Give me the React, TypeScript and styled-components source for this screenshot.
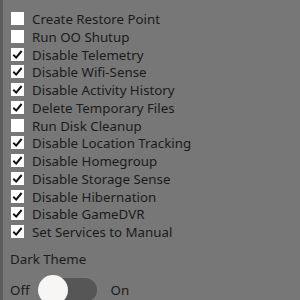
import React, { useState } from "react";
import styled, { createGlobalStyle } from "styled-components";

const GlobalStyle = createGlobalStyle`
  html, body {
    margin: 0;
    padding: 0;
    background: #777777;
    overflow: hidden;
  }
`;

const Page = styled.div`
  width: 300px;
  height: 300px;
  display: flex;
  background: #777777;
  font-family: "Noto Sans", "Open Sans", sans-serif;
  color: #1b1b1b;
`;

const Edge = styled.div`
  width: 3px;
  background: #5c5c5c;
`;

const Panel = styled.div`
  flex: 1;
  padding: 12px 0 0 7px;
  display: flex;
  flex-direction: column;
`;

const OptionList = styled.div`
  display: flex;
  flex-direction: column;
  padding-left: 1px;
`;

const Row = styled.label`
  height: 17.75px;
  display: flex;
  align-items: flex-start;
  gap: 8px;
  font-size: 13.3px;
  line-height: 14px;
  cursor: pointer;
  white-space: nowrap;
`;

const Box = styled.span`
  width: 13px;
  height: 13px;
  flex: none;
  background: #ffffff;
  display: flex;
  align-items: center;
  justify-content: center;
`;

const Label = styled.span`
  margin-top: 0px;
`;

const Section = styled.div`
  margin-top: 7px;
  font-size: 13.3px;
  line-height: 18px;
`;

const ToggleRow = styled.div`
  margin-top: 10px;
  display: flex;
  align-items: center;
  font-size: 13.3px;
  height: 30px;
`;

const Track = styled.div<{ $on: boolean }>`
  position: relative;
  width: 59px;
  height: 24px;
  border-radius: 12px;
  background: #565656;
  margin: 0 14px 0 8px;
  cursor: pointer;
`;

const Knob = styled.div<{ $on: boolean }>`
  position: absolute;
  top: -3px;
  left: ${(p) => (p.$on ? "29px" : "0px")};
  width: 30px;
  height: 30px;
  border-radius: 50%;
  background: #f8f5f5;
`;

const options: [string, boolean][] = [
  ["Create Restore Point", false],
  ["Run OO Shutup", false],
  ["Disable Telemetry", true],
  ["Disable Wifi-Sense", true],
  ["Disable Activity History", true],
  ["Delete Temporary Files", true],
  ["Run Disk Cleanup", false],
  ["Disable Location Tracking", true],
  ["Disable Homegroup", true],
  ["Disable Storage Sense", true],
  ["Disable Hibernation", true],
  ["Disable GameDVR", true],
  ["Set Services to Manual", true],
];

const Check = () => (
  <svg width="11" height="11" viewBox="0 0 11 11">
    <path d="M1.3 5.8 L4.2 8.6 L9.6 2" fill="none" stroke="#111" strokeWidth="2" />
  </svg>
);

const App = () => {
  const [checked, setChecked] = useState(options.map((o) => o[1]));
  const [dark, setDark] = useState(false);

  const toggle = (i: number) => {
    const next = [...checked];
    next[i] = !next[i];
    setChecked(next);
  };

  return (
    <Page>
      <GlobalStyle />
      <Edge />
      <Panel>
        <OptionList>
          {options.map(([name], i) => (
            <Row key={name} onClick={() => toggle(i)}>
              <Box>{checked[i] && <Check />}</Box>
              <Label>{name}</Label>
            </Row>
          ))}
        </OptionList>
        <Section>Dark Theme</Section>
        <ToggleRow>
          <span>Off</span>
          <Track $on={dark} onClick={() => setDark(!dark)}>
            <Knob $on={dark} />
          </Track>
          <span>On</span>
        </ToggleRow>
      </Panel>
    </Page>
  );
};

export default App;
